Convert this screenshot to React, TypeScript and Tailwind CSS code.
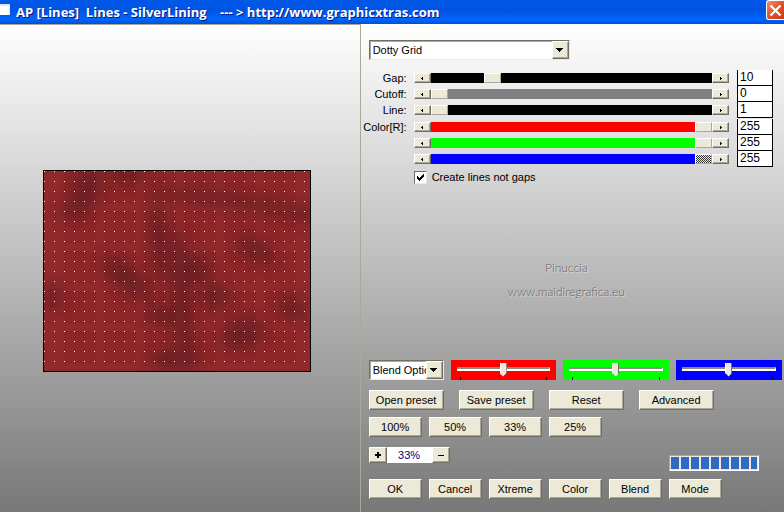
import React, { useState } from "react";

const raised =
  "bg-[#ece9d8] border border-t-white border-l-white border-r-[#716f64] border-b-[#716f64] shadow-[inset_-1px_-1px_0_#aca899]";

const sliders = [
  { name: "Gap", label: "Gap:", value: 10, pos: 20, track: "bg-black" },
  { name: "Cutoff", label: "Cutoff:", value: 0, pos: 0, track: "bg-[#808080]" },
  { name: "Line", label: "Line:", value: 1, pos: 0, track: "bg-black" },
];

const channels = [
  { name: "Red", label: "Color[R]:", value: 255, pos: 100, track: "bg-[#ff0000]" },
  { name: "Green", label: "", value: 255, pos: 100, track: "bg-[#00ff00]" },
  { name: "Blue", label: "", value: 255, pos: 100, track: "bg-[#0000ff]", focused: true },
];

const mixers = [
  { name: "Red blend", color: "bg-[#ff0000]" },
  { name: "Green blend", color: "bg-[#00ff00]" },
  { name: "Blue blend", color: "bg-[#0000ff]" },
];

const blotches = [
  [44, 20, 14, 22, 20],
  [84, 6, 18, 8, 0],
  [32, 40, 14, 10, 0],
  [116, 72, 8, 40, -4],
  [139, 130, 9, 74, -4],
  [84, 108, 32, 11, 38],
  [160, 28, 60, 5, 6],
  [225, 36, 52, 6, 12],
  [262, 46, 12, 7, 10],
  [212, 80, 22, 10, 30],
  [150, 100, 18, 14, 0],
  [118, 146, 16, 9, 10],
  [200, 163, 22, 14, -20],
  [250, 138, 16, 9, 30],
  [132, 190, 26, 10, 0],
  [10, 128, 9, 12, 0],
  [172, 126, 14, 12, 0],
];

function Arrow({ dir }: { dir: "left" | "right" | "down" }) {
  if (dir === "down") {
    return (
      <svg width="8" height="4" viewBox="0 0 8 4" shapeRendering="crispEdges">
        <path d="M0 0h7v1H0zM1 1h5v1H1zM2 2h3v1H2zM3 3h1v1H3z" />
      </svg>
    );
  }
  return (
    <svg width="3" height="3" viewBox="0 0 3 3" shapeRendering="crispEdges">
      <path d={dir === "left" ? "M0 1h1v1H0zM1 0h1v3H1z" : "M1 0h1v3H1zM2 1h1v1H2z"} />
    </svg>
  );
}

function Button({ children, wide }: { children: React.ReactNode; wide?: boolean }) {
  return (
    <button className={`${raised} h-5 leading-4 text-center ${wide ? "w-[75px]" : "w-[53px]"}`}>
      {children}
    </button>
  );
}

function Combo({ label, options, small }: { label: string; options: string[]; small?: boolean }) {
  return (
    <div
      className={`relative h-5 border border-t-[#716f64] border-l-[#716f64] border-r-[#ece9d8] border-b-[#ece9d8] bg-white ${
        small ? "w-[75px]" : "w-[201px]"
      }`}
    >
      <select
        aria-label={label}
        className="block appearance-none w-full h-full pl-[3px] pr-[17px] leading-4 outline-none bg-white shadow-[inset_1px_1px_0_#aca899]"
      >
        {options.map((o) => (
          <option key={o}>{o}</option>
        ))}
      </select>
      <span
        className={`${raised} absolute top-0 right-0 bottom-0 w-[17px] flex items-center justify-center pointer-events-none`}
      >
        <Arrow dir="down" />
      </span>
    </div>
  );
}

function SliderRow({ name, label, value, pos, track, focused }: any) {
  const [level, setLevel] = useState(pos);
  return (
    <div className="flex items-center h-4">
      <label htmlFor={name} className="w-[46px] mr-[7px] text-right leading-4 shrink-0">
        {label}
      </label>
      <button aria-label={`${name} down`} className={`${raised} w-[17px] h-2.5 flex items-center justify-center`}>
        <Arrow dir="left" />
      </button>
      <input
        id={name}
        aria-label={name}
        type="range"
        value={level}
        onChange={(e) => setLevel(Number(e.target.value))}
        className={`${track} appearance-none flex-1 min-w-0 h-2.5 outline-none [&::-webkit-slider-thumb]:appearance-none [&::-webkit-slider-thumb]:w-[17px] [&::-webkit-slider-thumb]:h-2.5 [&::-webkit-slider-thumb]:bg-[#ece9d8] [&::-webkit-slider-thumb]:border [&::-webkit-slider-thumb]:border-t-white [&::-webkit-slider-thumb]:border-l-white [&::-webkit-slider-thumb]:border-r-[#aca899] [&::-webkit-slider-thumb]:border-b-[#aca899] ${
          focused
            ? "[&::-webkit-slider-thumb]:bg-[repeating-conic-gradient(#333_0_25%,#ece9d8_0_50%)] [&::-webkit-slider-thumb]:bg-[length:2px_2px]"
            : ""
        }`}
      />
      <button aria-label={`${name} up`} className={`${raised} w-[17px] h-2.5 flex items-center justify-center`}>
        <Arrow dir="right" />
      </button>
      <input
        type="text"
        aria-label={`${name} value`}
        defaultValue={value}
        className="w-9 h-4 ml-2 pl-0.5 pb-0.5 bg-white border border-t-0 border-black leading-3 text-xs outline-none"
      />
    </div>
  );
}

function Mixer({ name, color }: { name: string; color: string }) {
  return (
    <div className={`${color} flex-1 h-5 px-1.5`}>
      <input
        type="range"
        aria-label={name}
        defaultValue={50}
        className="block appearance-none w-full h-[17px] bg-transparent outline-none [&::-webkit-slider-runnable-track]:h-1 [&::-webkit-slider-runnable-track]:bg-white [&::-webkit-slider-runnable-track]:border-t-2 [&::-webkit-slider-runnable-track]:border-t-[#8f8c7e] [&::-webkit-slider-runnable-track]:border-r [&::-webkit-slider-runnable-track]:border-r-white [&::-webkit-slider-thumb]:appearance-none [&::-webkit-slider-thumb]:w-[7px] [&::-webkit-slider-thumb]:h-3.5 [&::-webkit-slider-thumb]:-mt-1.5 [&::-webkit-slider-thumb]:bg-[#ece9d8] [&::-webkit-slider-thumb]:border-l [&::-webkit-slider-thumb]:border-l-white [&::-webkit-slider-thumb]:border-r [&::-webkit-slider-thumb]:border-r-[#716f64] [&::-webkit-slider-thumb]:[clip-path:polygon(0_0,100%_0,100%_75%,50%_100%,0_75%)]"
      />
      <div className="flex justify-between px-[3px]">
        <span className="w-px h-[3px] bg-black/80" />
        <span className="w-px h-[3px] bg-black/80" />
      </div>
    </div>
  );
}

function Preview() {
  return (
    <svg width="268" height="202" viewBox="0 0 268 202" role="img" aria-label="Preview">
      <defs>
        <filter id="soft" x="-20%" y="-20%" width="140%" height="140%">
          <feGaussianBlur stdDeviation="7" />
        </filter>
        <pattern id="weave" width="2" height="2" patternUnits="userSpaceOnUse">
          <rect width="1" height="1" fill="#501b1d" />
          <rect x="1" y="1" width="1" height="1" fill="#501b1d" />
        </pattern>
        <pattern id="dots" x="1" y="1" width="10" height="10" patternUnits="userSpaceOnUse">
          <rect width="1" height="1" fill="#fff" />
        </pattern>
      </defs>
      <rect width="268" height="202" fill="#8f292b" />
      <g fill="#5a1e20" opacity="0.6" filter="url(#soft)">
        {blotches.map(([x, y, rx, ry, turn], i) => (
          <ellipse key={i} cx={x} cy={y} rx={rx} ry={ry} transform={`rotate(${turn} ${x} ${y})`} />
        ))}
      </g>
      <g fill="url(#weave)" opacity="0.2" shapeRendering="crispEdges">
        {[0, 1, 2, 3, 4, 5].map((c) =>
          [0, 1, 2, 3, 4].map((r) => (
            <rect key={`${c}-${r}`} x={c * 40 + 21} y={r * 40 + 1} width="32" height="32" />
          ))
        )}
      </g>
      <rect width="268" height="202" fill="url(#dots)" shapeRendering="crispEdges" />
      <rect x="0.5" y="0.5" width="267" height="201" fill="none" stroke="#000" />
    </svg>
  );
}

function App() {
  return (
    <div className="min-h-screen flex flex-col overflow-hidden font-['Liberation_Sans',sans-serif] text-[11px] text-black">
      <header className="h-6 flex items-center bg-[linear-gradient(#0058e6,#0054e3_45%,#0066ff_80%,#0050d8)]">
        <span className="w-2.5 h-[11px] bg-white border-t-2 border-r border-[#d8e4f8] self-start mt-1" />
        <h1 className="ml-1.5 whitespace-pre font-['Open_Sans',sans-serif] font-bold text-[13px] leading-5 text-white [text-shadow:1px_1px_0_#0a1883]">
          {"AP [Lines]  Lines - SilverLining    --- > http://www.graphicxtras.com"}
        </h1>
        <button
          aria-label="Close"
          className="ml-auto mb-1 w-[18px] h-5 flex items-center justify-center rounded-l-[3px] border border-r-0 border-white bg-[linear-gradient(135deg,#f0906e,#e2512b_50%,#c93a10)]"
        >
          <svg width="13" height="13" viewBox="0 0 13 13" stroke="#fff" strokeWidth="2.2">
            <path d="M1.5 1.5l10 10M11.5 1.5l-10 10" />
          </svg>
        </button>
      </header>
      <div className="flex-1 flex bg-[linear-gradient(#fff,#787878)]">
        <section className="w-[46%] shrink-0 flex items-center justify-center pr-1.5 pt-1 border-t border-r border-[#aca899]">
          <Preview />
        </section>
        <main className="flex-1 min-w-0 flex flex-col pt-4 pb-[13px]">
          <div className="pl-2">
            <Combo label="Effect" options={["Dotty Grid", "Lines"]} />
          </div>
          <div className="mt-2.5 pr-[11px] flex flex-col gap-px">
            <div>
              {sliders.map((s) => (
                <SliderRow key={s.name} {...s} />
              ))}
            </div>
            <div>
              {channels.map((s) => (
                <SliderRow key={s.name} {...s} />
              ))}
            </div>
          </div>
          <label className="mt-1 pl-[53px] flex items-center gap-[5px] leading-[13px]">
            <span className="relative w-[13px] h-[13px]">
              <input
                type="checkbox"
                defaultChecked
                className="peer block appearance-none w-[13px] h-[13px] bg-white border border-t-[#716f64] border-l-[#716f64] border-r-[#ece9d8] border-b-[#ece9d8]"
              />
              <svg
                className="absolute inset-0 hidden peer-checked:block pointer-events-none"
                width="13"
                height="13"
                viewBox="0 0 13 13"
                shapeRendering="crispEdges"
              >
                <path d="M3 5h1v3H3zM4 6h1v3H4zM5 7h1v3H5zM6 6h1v3H6zM7 5h1v3H7zM8 4h1v3H8zM9 3h1v3H9z" />
              </svg>
            </span>
            Create lines not gaps
          </label>
          <div className="my-auto pt-4 pr-3 text-center font-['Lato',sans-serif] font-light text-xs leading-6 text-[#666] [text-shadow:1px_1px_0_#ddd]">
            <p>Pinuccia</p>
            <p>www.maidiregrafica.eu</p>
          </div>
          <div className="pl-2 pr-0.5 flex items-end gap-[7px]">
            <Combo small label="Blend options" options={["Blend Options"]} />
            {mixers.map((m) => (
              <Mixer key={m.name} {...m} />
            ))}
          </div>
          <div className="mt-2.5 pl-2 flex gap-[15px]">
            <Button wide>Open preset</Button>
            <Button wide>Save preset</Button>
            <Button wide>Reset</Button>
            <Button wide>Advanced</Button>
          </div>
          <div className="mt-[7px] pl-2 flex gap-[7px]">
            <Button>100%</Button>
            <Button>50%</Button>
            <Button>33%</Button>
            <Button>25%</Button>
          </div>
          <div className="mt-2.5 pl-2 pr-[25px] flex items-start">
            <button aria-label="Zoom in" className={`${raised} w-[18px] h-4 flex items-center justify-center`}>
              <svg width="6" height="6" viewBox="0 0 6 6" shapeRendering="crispEdges">
                <path d="M2 0h2v6H2zM0 2h6v2H0z" />
              </svg>
            </button>
            <input
              type="text"
              aria-label="Zoom"
              defaultValue="33%"
              className="w-[45px] h-4 bg-white text-center text-[#000080] leading-4 outline-none"
            />
            <button aria-label="Zoom out" className={`${raised} w-[18px] h-4 flex items-center justify-center`}>
              <svg width="6" height="1" viewBox="0 0 6 1" shapeRendering="crispEdges">
                <path d="M0 0h6v1H0z" />
              </svg>
            </button>
            <div
              role="progressbar"
              aria-label="Progress"
              className="ml-auto mt-2 w-[90px] h-4 p-px flex gap-0.5 bg-[#ece9d8] border border-t-[#aca899] border-l-[#aca899] border-r-white border-b-white"
            >
              {[1, 2, 3, 4, 5, 6, 7, 8].map((n) => (
                <span key={n} className="w-2 bg-[#316ac5]" />
              ))}
              <span className="flex-1 bg-[#316ac5]" />
            </div>
          </div>
          <div className="mt-2 pl-2 flex gap-[7px]">
            <Button>OK</Button>
            <Button>Cancel</Button>
            <Button>Xtreme</Button>
            <Button>Color</Button>
            <Button>Blend</Button>
            <Button>Mode</Button>
          </div>
        </main>
      </div>
    </div>
  );
}

export default App;
